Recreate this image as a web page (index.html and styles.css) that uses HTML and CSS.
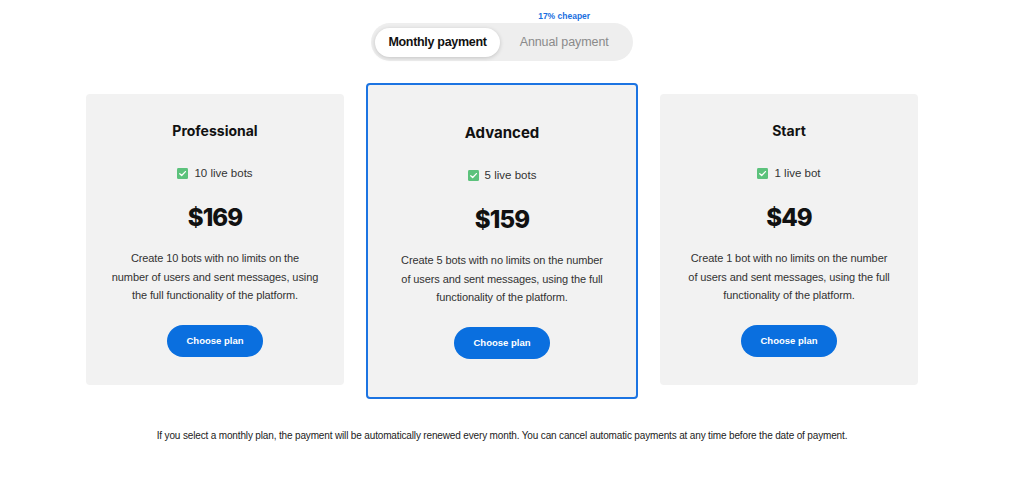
FILE: index.html
```html
<!DOCTYPE html>
<html lang="en">
<head>
<meta charset="utf-8">
<title>Pricing</title>
<link rel="stylesheet" href="styles.css">
</head>
<body>
<main class="page">
  <div class="toggle-row">
    <div class="toggle">
      <button class="toggle-btn active">Monthly payment</button>
      <button class="toggle-btn">Annual payment<span class="discount">17% cheaper</span></button>
    </div>
  </div>

  <section class="plans">
    <article class="plan">
      <h2 class="plan-title">Professional</h2>
      <p class="plan-feature"><svg class="check" viewBox="0 0 12 12" width="11" height="11"><rect width="12" height="12" rx="1.5" fill="#5cc27c"/><path d="M3 6.2 5.1 8.2 9.2 3.9" fill="none" stroke="#fff" stroke-width="1.4" stroke-linecap="round" stroke-linejoin="round"/></svg>10 live bots</p>
      <p class="plan-price">$169</p>
      <p class="plan-desc">Create 10 bots with no limits on the<br>number of users and sent messages, using<br>the full functionality of the platform.</p>
      <button class="plan-btn">Choose plan</button>
    </article>

    <article class="plan featured">
      <h2 class="plan-title">Advanced</h2>
      <p class="plan-feature"><svg class="check" viewBox="0 0 12 12" width="11" height="11"><rect width="12" height="12" rx="1.5" fill="#5cc27c"/><path d="M3 6.2 5.1 8.2 9.2 3.9" fill="none" stroke="#fff" stroke-width="1.4" stroke-linecap="round" stroke-linejoin="round"/></svg>5 live bots</p>
      <p class="plan-price">$159</p>
      <p class="plan-desc">Create 5 bots with no limits on the number<br>of users and sent messages, using the full<br>functionality of the platform.</p>
      <button class="plan-btn">Choose plan</button>
    </article>

    <article class="plan">
      <h2 class="plan-title">Start</h2>
      <p class="plan-feature"><svg class="check" viewBox="0 0 12 12" width="11" height="11"><rect width="12" height="12" rx="1.5" fill="#5cc27c"/><path d="M3 6.2 5.1 8.2 9.2 3.9" fill="none" stroke="#fff" stroke-width="1.4" stroke-linecap="round" stroke-linejoin="round"/></svg>1 live bot</p>
      <p class="plan-price">$49</p>
      <p class="plan-desc">Create 1 bot with no limits on the number<br>of users and sent messages, using the full<br>functionality of the platform.</p>
      <button class="plan-btn">Choose plan</button>
    </article>
  </section>

  <p class="note">If you select a monthly plan, the payment will be automatically renewed every month. You can cancel automatic payments at any time before the date of payment.</p>
</main>
</body>
</html>
```

FILE: styles.css
```css
* { box-sizing: border-box; }

body {
  margin: 0;
  background: #fff;
  color: #222;
  font-family: "Liberation Sans", Arial, sans-serif;
}

.page {
  width: 1004px;
  display: flex;
  flex-direction: column;
  align-items: center;
}

.toggle-row {
  margin-top: 23px;
}

.toggle {
  display: flex;
  align-items: center;
  height: 38px;
  padding: 0 4px;
  border-radius: 19px;
  background: #eeeeee;
}

.toggle-btn {
  position: relative;
  height: 29px;
  border: 0;
  border-radius: 15px;
  background: transparent;
  font-family: "Liberation Sans", Arial, sans-serif;
  font-size: 12.5px;
  letter-spacing: -0.1px;
  color: #8a8a8a;
  padding: 0 20px;
  cursor: pointer;
}

.toggle-btn.active {
  background: #fff;
  color: #111;
  font-weight: bold;
  padding: 0 13px;
  letter-spacing: -0.3px;
  box-shadow: 0 1px 4px rgba(0, 0, 0, 0.18);
}

.discount {
  position: absolute;
  left: 50%;
  top: -17px;
  transform: translateX(-50%);
  white-space: nowrap;
  font-size: 8.5px;
  font-weight: bold;
  letter-spacing: 0;
  color: #1a6fe0;
}

.plans {
  display: flex;
  align-items: flex-start;
  gap: 22px;
  margin-top: 22px;
}

.plan {
  width: 258px;
  height: 291px;
  margin-top: 11px;
  padding: 28px 10px 0;
  border-radius: 4px;
  background: #f2f2f2;
  display: flex;
  flex-direction: column;
  align-items: center;
  text-align: center;
}

.plan.featured {
  width: 272px;
  height: 316px;
  margin-top: 0;
  padding-top: 39px;
  border: 2px solid #1c74e2;
}

.plan-title {
  margin: 0;
  font-family: Inter, "DejaVu Sans", sans-serif;
  font-weight: 700;
  font-size: 14px;
  line-height: 18px;
  color: #111;
}

.featured .plan-title {
  font-size: 15px;
}

.plan-feature {
  margin: 25px 0 0;
  display: flex;
  align-items: center;
  gap: 6px;
  font-size: 11.5px;
  line-height: 16px;
  color: #333;
}

.check { display: block; }

.plan-price {
  margin: 22px 0 0;
  font-family: Inter, "DejaVu Sans", sans-serif;
  font-weight: 800;
  font-size: 24px;
  line-height: 30px;
  color: #111;
  letter-spacing: -0.9px;
}

.plan-desc {
  margin: 16px 0 0;
  font-size: 11px;
  line-height: 18.5px;
  letter-spacing: -0.1px;
  color: #333;
  white-space: nowrap;
}

.plan-btn {
  margin-top: 20px;
  width: 96px;
  height: 32px;
  border: 0;
  border-radius: 16px;
  background: #0a6fdf;
  color: #fff;
  font-family: "Liberation Sans", Arial, sans-serif;
  font-weight: bold;
  font-size: 9.5px;
  cursor: pointer;
}

.note {
  margin: 30px 0 0;
  font-size: 10px;
  line-height: 14px;
  letter-spacing: -0.15px;
  color: #222;
}
```
